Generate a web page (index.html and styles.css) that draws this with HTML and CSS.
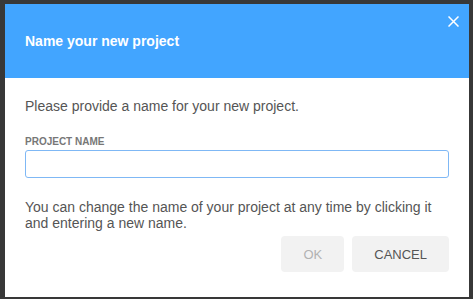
FILE: index.html
```html
<!DOCTYPE html>
<html lang="en">
  <head>
    <meta charset="UTF-8" />
    <title>Name your new project</title>
    <link rel="stylesheet" href="styles.css">
  </head>
  <body>
    <div class="dialog">
      <!-- Header -->
      <div class="dialog-header">
        <h2>Name your new project</h2>
        <button class="close-btn" aria-label="Close">
          <svg width="11" height="11" viewBox="0 0 11 11">
            <path d="M0.5 0.5 L10.5 10.5 M10.5 0.5 L0.5 10.5" stroke="#fff" stroke-width="1.5" fill="none" />
          </svg>
        </button>
      </div>

      <!-- Body -->
      <div class="dialog-body">
        <p class="intro">Please provide a name for your new project.</p>
        <label for="projectName" class="field-label">PROJECT NAME</label>
        <input type="text" id="projectName" class="field-input" />
        <p class="hint">You can change the name of your project at any time by clicking it and entering a new name.</p>
        <div class="actions">
          <button class="btn" disabled>OK</button>
          <button class="btn">CANCEL</button>
        </div>
      </div>
    </div>
  </body>
</html>
```

FILE: styles.css
```css
body {
  margin: 0;
  background: #383838;
  font-family: "Liberation Sans", Arial, sans-serif;
}

.dialog {
  margin: 4px 4px 2px 5px;
  width: 464px;
  background: #fff;
}

.dialog-header {
  position: relative;
  height: 74px;
  background: #42a5ff;
  display: flex;
  align-items: center;
  padding: 0 20px;
}

.dialog-header h2 {
  margin: 0;
  color: #fff;
  font-size: 14px;
  font-weight: bold;
}

.close-btn {
  position: absolute;
  top: 8px;
  right: 6px;
  width: 19px;
  height: 19px;
  padding: 0;
  border: none;
  background: none;
  display: flex;
  align-items: center;
  justify-content: center;
  cursor: pointer;
}

.dialog-body {
  padding: 20px 20px 25px;
  color: #555;
  font-size: 14px;
  line-height: 16px;
}

.intro {
  margin: 0 0 22px;
}

.field-label {
  display: block;
  font-size: 10px;
  line-height: 12px;
  font-weight: bold;
  color: #777;
  margin-bottom: 2px;
}

.field-input {
  display: block;
  box-sizing: border-box;
  width: 424px;
  height: 28px;
  border: 1px solid #7fb8f5;
  border-radius: 3px;
  outline: none;
  font: inherit;
  padding: 0 8px;
}

.hint {
  margin: 21px 0 5px;
}

.actions {
  display: flex;
  justify-content: flex-end;
  gap: 8px;
}

.btn {
  height: 36px;
  padding: 0 22px;
  border: none;
  border-radius: 4px;
  background: #f2f2f2;
  color: #555;
  font-family: inherit;
  font-size: 13px;
  cursor: pointer;
}

.btn:disabled {
  color: #b3b3b3;
  cursor: default;
}
```
